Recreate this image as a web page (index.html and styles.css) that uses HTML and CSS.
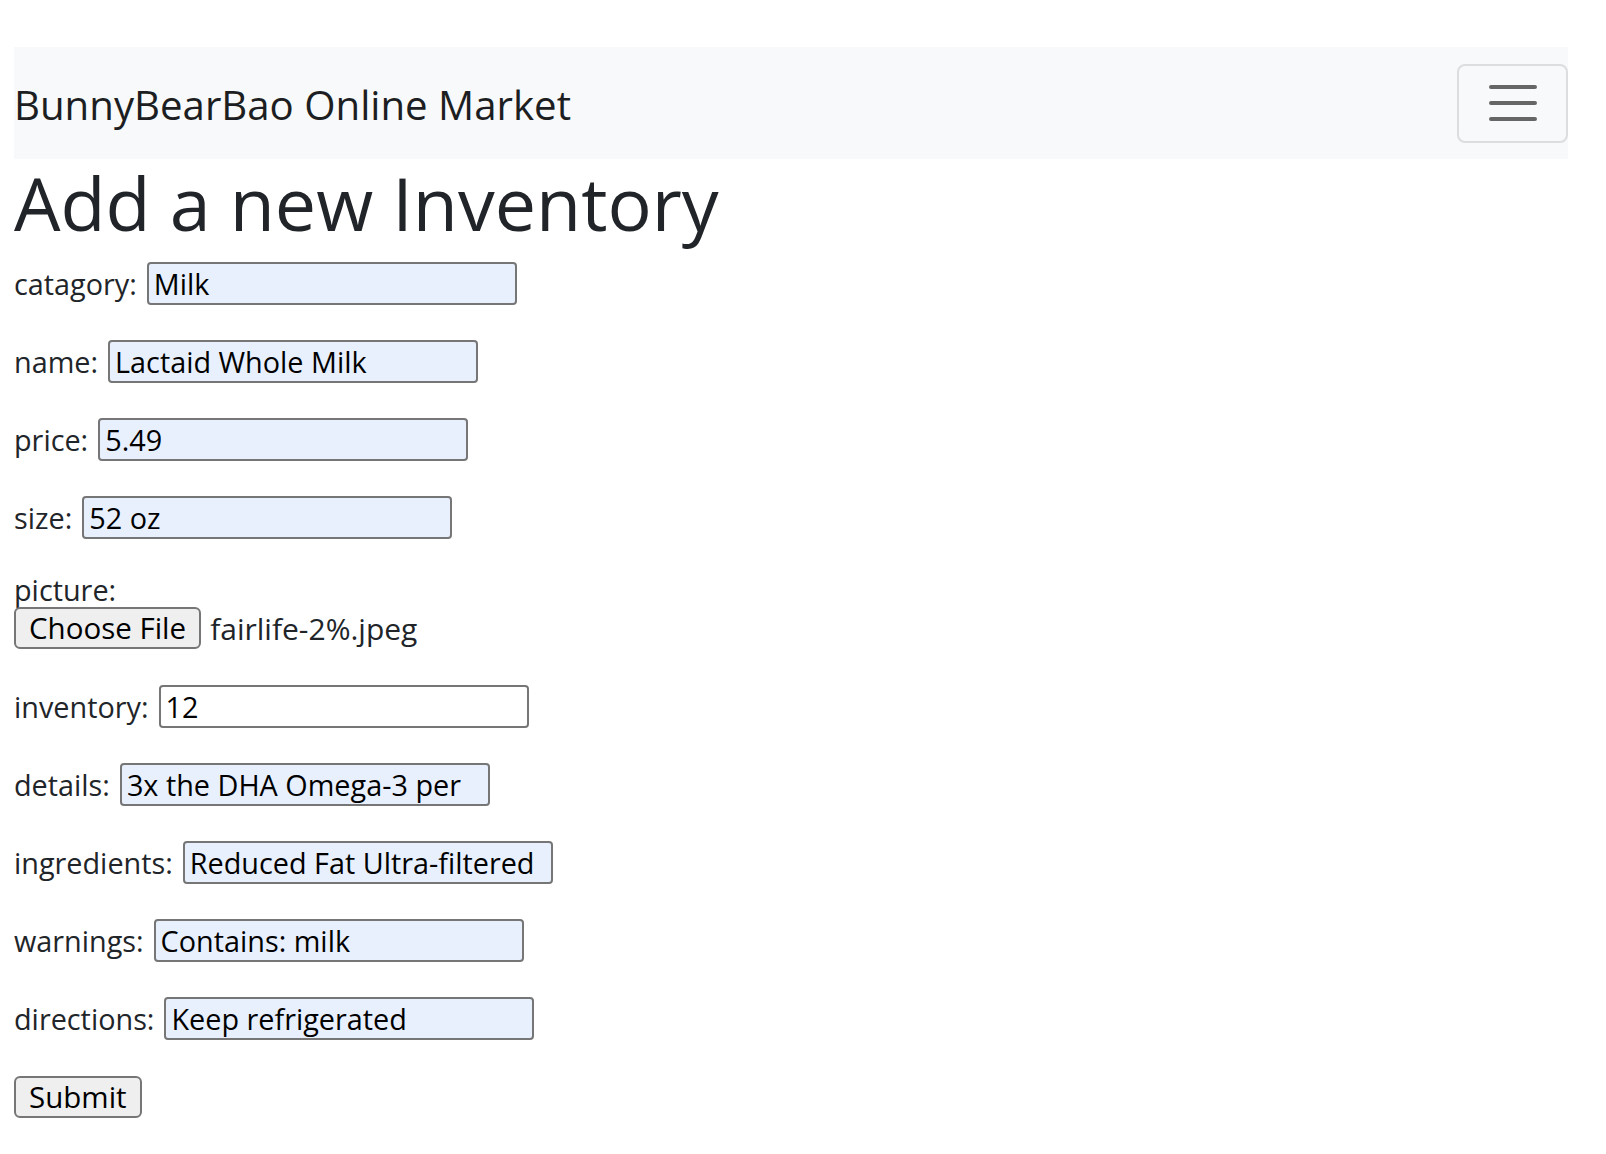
FILE: index.html
```html
<!DOCTYPE html>
<html lang="en">
<head>
<meta charset="utf-8">
<title>BunnyBearBao Online Market</title>
<link rel="stylesheet" href="styles.css">
</head>
<body>
<div class="page">
  <nav class="navbar">
    <span class="brand">BunnyBearBao Online Market</span>
    <button type="button" class="toggler" aria-label="Toggle navigation">
      <svg class="toggler-icon" width="52" height="40" viewBox="0 0 52 40">
        <path d="M4 4H48M4 20H48M4 36H48" stroke="#666" stroke-width="4" stroke-linecap="round" fill="none"/>
      </svg>
    </button>
  </nav>
  <h1 class="title">Add a new Inventory</h1>
  <form class="form">
    <div class="row"><label class="label">catagory:</label><input class="field autofill" value="Milk"></div>
    <div class="row"><label class="label">name:</label><input class="field autofill" value="Lactaid Whole Milk"></div>
    <div class="row"><label class="label">price:</label><input class="field autofill" value="5.49"></div>
    <div class="row"><label class="label">size:</label><input class="field autofill" value="52 oz"></div>
    <div class="picture">
      <label class="label picture-label">picture:</label>
      <div class="file"><button type="button" class="btn">Choose File</button><span class="filename">fairlife-2%.jpeg</span></div>
    </div>
    <div class="row"><label class="label">inventory:</label><input class="field" value="12"></div>
    <div class="row"><label class="label">details:</label><input class="field autofill" value="3x the DHA Omega-3 per"></div>
    <div class="row"><label class="label">ingredients:</label><input class="field autofill" value="Reduced Fat Ultra-filtered"></div>
    <div class="row"><label class="label">warnings:</label><input class="field autofill" value="Contains: milk"></div>
    <div class="row"><label class="label">directions:</label><input class="field autofill" value="Keep refrigerated"></div>
    <button type="button" class="btn submit">Submit</button>
  </form>
</div>
</body>
</html>
```
FILE: styles.css
```css
html, body {
  margin: 0;
  padding: 0;
  background: #ffffff;
}

body {
  font-family: "Open Sans", "Liberation Sans", sans-serif;
  color: #212529;
}

.page {
  padding: 47px 38px 0 14px;
}

.navbar {
  height: 112px;
  background: #f8f9fa;
  display: flex;
  align-items: center;
  justify-content: space-between;
}

.brand {
  font-size: 40.2px;
  line-height: 1;
  color: #1c1e21;
  margin-top: 5px;
}

.toggler {
  width: 111px;
  height: 79px;
  box-sizing: border-box;
  padding: 0;
  border: 2px solid #dcdddf;
  border-radius: 8px;
  background: transparent;
  display: flex;
  align-items: center;
  justify-content: center;
}

.toggler-icon {
  display: block;
}

.title {
  margin: 0;
  font-size: 73.6px;
  font-weight: 400;
  line-height: 88px;
  color: #212529;
}

.form {
  margin-top: 15px;
  display: flex;
  flex-direction: column;
  align-items: flex-start;
}

.row {
  display: flex;
  align-items: center;
  gap: 10px;
  height: 43px;
  margin-bottom: 35px;
}

.label {
  font-size: 28.8px;
  line-height: 39px;
  color: #212529;
}

.field {
  box-sizing: border-box;
  width: 370px;
  height: 43px;
  margin: 0;
  padding: 0 5px;
  border: 2px solid #767676;
  border-radius: 4px;
  background: #ffffff;
  font-family: "Open Sans", "Liberation Sans", sans-serif;
  font-size: 28.8px;
  color: #000000;
  outline: none;
}

.autofill {
  background: #e8f0fe;
}

.picture {
  display: flex;
  flex-direction: column;
  align-items: flex-start;
  margin-top: -4px;
  margin-bottom: 36px;
}

.picture-label {
  display: block;
}

.file {
  display: flex;
  align-items: center;
  gap: 9px;
  margin-top: -2px;
}

.btn {
  box-sizing: border-box;
  height: 42px;
  margin: 0;
  padding: 0 13px;
  border: 2px solid #767676;
  border-radius: 6px;
  background: #efefef;
  font-family: "Open Sans", "Liberation Sans", sans-serif;
  font-size: 29.5px;
  line-height: 1;
  color: #000000;
}

.filename {
  font-size: 30px;
  line-height: 39px;
  color: #212529;
}

.submit {
  margin-top: 1px;
}
```
